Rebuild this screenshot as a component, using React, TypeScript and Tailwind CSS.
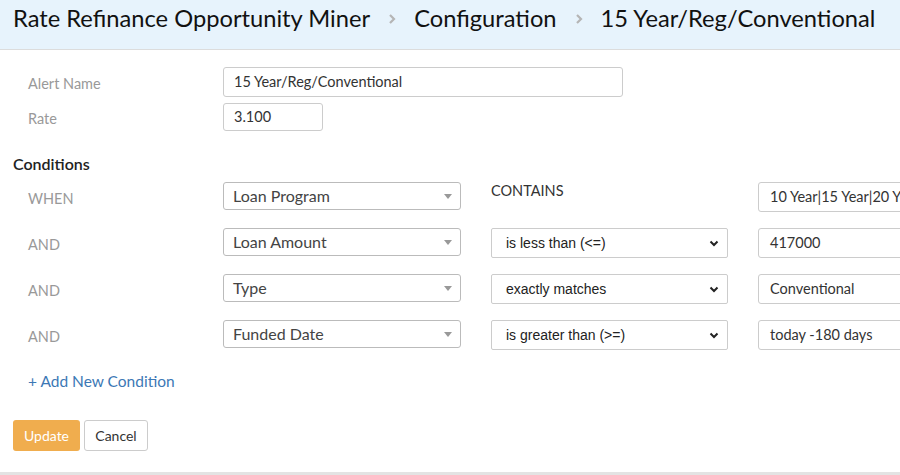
export default function App() {
  const rows = [
    { label: "WHEN", field: "Loan Program", op: null, value: "10 Year|15 Year|20 Year|30 Year" },
    { label: "AND", field: "Loan Amount", op: "is less than (<=)", value: "417000" },
    { label: "AND", field: "Type", op: "exactly matches", value: "Conventional" },
    { label: "AND", field: "Funded Date", op: "is greater than (>=)", value: "today -180 days" },
  ]

  return (
    <div className="w-[900px] h-[475px] overflow-hidden bg-white flex flex-col font-['Lato',sans-serif]">
      <div className="h-[50px] shrink-0 bg-[#e7f3fc] border-b border-[#dcdcdc] flex items-center pb-[12px] pl-[13px] text-[23.7px] text-[#111] whitespace-nowrap">
        <span>Rate Refinance Opportunity Miner</span>
        <Crumb />
        <span>Configuration</span>
        <Crumb />
        <span>15 Year/Reg/Conventional</span>
      </div>

      <div className="flex-1 px-[13px] pt-[17px]">
        <div className="flex items-center h-[30px]">
          <div className="w-[210px] shrink-0 pl-[15px] pt-[3px] text-[14.5px] text-[#999]">Alert Name</div>
          <div className="w-[400px] h-[30px] border border-[#ccc] rounded-[3px] flex items-center px-[10px] text-[14.5px] text-[#333]">
            15 Year/Reg/Conventional
          </div>
        </div>
        <div className="flex items-center h-[28px] mt-[6px]">
          <div className="w-[210px] shrink-0 pl-[15px] pt-[3px] text-[14.5px] text-[#999]">Rate</div>
          <div className="w-[100px] h-[28px] border border-[#ccc] rounded-[3px] flex items-center px-[10px] text-[14.5px] text-[#333]">
            3.100
          </div>
        </div>

        <div className="mt-[21px] text-[16px] text-[#222] font-semibold">Conditions</div>

        <div className="mt-[6px] flex flex-col gap-[16px]">
          {rows.map((r, i) => (
            <div key={i} className="flex items-start h-[30px]">
              <div className="w-[210px] shrink-0 pl-[15px] pt-[6px] text-[14.5px] text-[#999]">{r.label}</div>
              <div className="w-[238px] shrink-0 h-[28px] border border-[#bbb] rounded-[3px] flex items-center justify-between pl-[9px] pr-[8px] text-[16px] text-[#444]">
                <span>{r.field}</span>
                <svg width="8" height="5" viewBox="0 0 8 5">
                  <path d="M0 0h8L4 5z" fill="#999" />
                </svg>
              </div>
              {r.op ? (
                <div className="ml-[30px] shrink-0 w-[237px] h-[30px] border border-[#ccc] rounded-[2px] flex items-center justify-between pl-[14px] pr-[8px] text-[14px] text-[#222] font-['Liberation_Sans',sans-serif]">
                  <span>{r.op}</span>
                  <svg width="10" height="7" viewBox="0 0 10 7">
                    <path d="M1.5 1.5L5 5l3.5-3.5" fill="none" stroke="#222" strokeWidth="2" />
                  </svg>
                </div>
              ) : (
                <div className="ml-[30px] shrink-0 w-[237px] -mt-[2px] text-[14.5px] text-[#333]">CONTAINS</div>
              )}
              <div className="ml-[30px] w-[180px] shrink-0 h-[30px] border border-[#ccc] rounded-[3px] flex items-center px-[11px] text-[14.5px] text-[#333] whitespace-nowrap overflow-hidden">
                {r.value}
              </div>
            </div>
          ))}
        </div>

        <div className="mt-[20px] pl-[15px] text-[15.5px] text-[#3c78b5]">+ Add New Condition</div>

        <div className="mt-[27px] flex gap-[4px]">
          <button className="w-[67px] h-[31px] rounded-[3px] bg-[#f0ad4e] text-white text-[14px]">Update</button>
          <button className="w-[64px] h-[31px] rounded-[3px] border border-[#ccc] bg-white text-[#333] text-[14px]">Cancel</button>
        </div>
      </div>

      <div className="h-[3px] shrink-0 bg-[#e3e3e3]" />
    </div>
  )
}

function Crumb() {
  return (
    <svg className="mx-[17px] shrink-0" width="10" height="12" viewBox="0 0 10 12">
      <path d="M3 2l4 4-4 4" fill="none" stroke="#b5b5b5" strokeWidth="2.2" />
    </svg>
  )
}
